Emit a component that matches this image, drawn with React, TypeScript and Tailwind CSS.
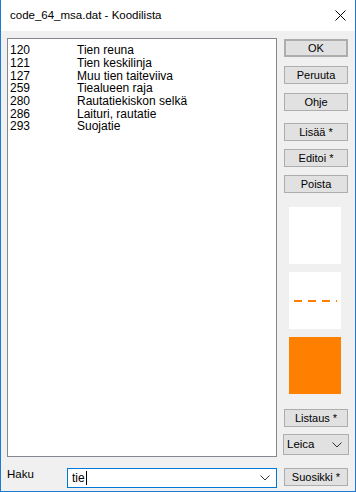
import React from 'react';

const rows = [
  ['120', 'Tien reuna'],
  ['121', 'Tien keskilinja'],
  ['127', 'Muu tien taiteviiva'],
  ['259', 'Tiealueen raja'],
  ['280', 'Rautatiekiskon selkä'],
  ['286', 'Laituri, rautatie'],
  ['293', 'Suojatie'],
];

function Btn({ label, className = '' }: { label: string; className?: string }) {
  return (
    <div
      className={`h-[18px] w-[64px] flex items-center justify-center bg-[#e1e1e1] border border-[#adadad] text-[11px] text-black ${className}`}
    >
      {label}
    </div>
  );
}

function Chevron() {
  return (
    <svg width="10" height="6" viewBox="0 0 10 6" className="shrink-0">
      <path d="M0.5 0.5 L5 5 L9.5 0.5" fill="none" stroke="#333" strokeWidth="1" />
    </svg>
  );
}

export default function App() {
  return (
    <div
      className="w-[356px] h-[492px] flex flex-col border-x border-b border-[#1c7ad2] bg-[#f0f0f0] overflow-hidden"
      style={{ fontFamily: '"Liberation Sans", Arial, sans-serif' }}
    >
      {/* Title bar */}
      <div className="h-[31px] bg-white flex items-center justify-between pl-[9px] pr-[9px] shrink-0">
        <span className="text-[11.5px] text-black">code_64_msa.dat - Koodilista</span>
        <svg width="11" height="11" viewBox="0 0 11 11">
          <path d="M0.5 0.5 L10.5 10.5 M10.5 0.5 L0.5 10.5" stroke="#000" strokeWidth="1" />
        </svg>
      </div>

      {/* Body */}
      <div className="flex pl-[6px] pt-[7px]">
        {/* Left column */}
        <div className="flex flex-col w-[270px]">
          <div className="h-[419px] bg-white border border-[#828790] pt-[5px] pl-[2px]">
            {rows.map(([code, name]) => (
              <div key={code} className="flex h-[12.7px] items-center text-[12px] text-black leading-none">
                <span className="w-[67px]">{code}</span>
                <span>{name}</span>
              </div>
            ))}
          </div>
          <div className="flex items-center mt-[11px]">
            <span className="w-[60px] text-[11.5px] text-black -mt-[6px]">Haku</span>
            <div className="w-[210px] h-[20px] bg-white border border-[#0078d7] flex items-center justify-between pl-[4px] pr-[6px]">
              <span className="text-[12px] text-black flex items-center">
                tie<span className="inline-block w-[1px] h-[14px] bg-black ml-[1px]" />
              </span>
              <Chevron />
            </div>
          </div>
        </div>

        {/* Right column */}
        <div className="flex flex-col ml-[7px] w-[64px]">
          <Btn label="OK" className="mt-[1px] border-2 border-[#0078d7]" />
          <Btn label="Peruuta" className="mt-[9px]" />
          <Btn label="Ohje" className="mt-[9px]" />
          <Btn label="Lisää *" className="mt-[12px]" />
          <Btn label="Editoi *" className="mt-[8px]" />
          <Btn label="Poista" className="mt-[8px]" />

          <div className="ml-[5px] mt-[14px] w-[52px] h-[57px] bg-white" />
          <div className="ml-[5px] mt-[8px] w-[52px] h-[57px] bg-white flex items-center">
            <svg width="52" height="57" viewBox="0 0 52 57">
              <path d="M5 29 H13 M19 29 H27 M33 29 H41 M47 29 H48" stroke="#ff8000" strokeWidth="2" />
            </svg>
          </div>
          <div className="ml-[5px] mt-[8px] w-[52px] h-[57px] bg-[#ff8000]" />

          <Btn label="Listaus *" className="mt-[15px]" />
          <div className="mt-[7px] -ml-[1px] w-[66px] h-[21px] bg-[#e1e1e1] border border-[#adadad] flex items-center justify-between pl-[3px] pr-[6px]">
            <span className="text-[11.5px] text-black">Leica</span>
            <Chevron />
          </div>
          <Btn label="Suosikki *" className="mt-[13px]" />
        </div>
      </div>
    </div>
  );
}
